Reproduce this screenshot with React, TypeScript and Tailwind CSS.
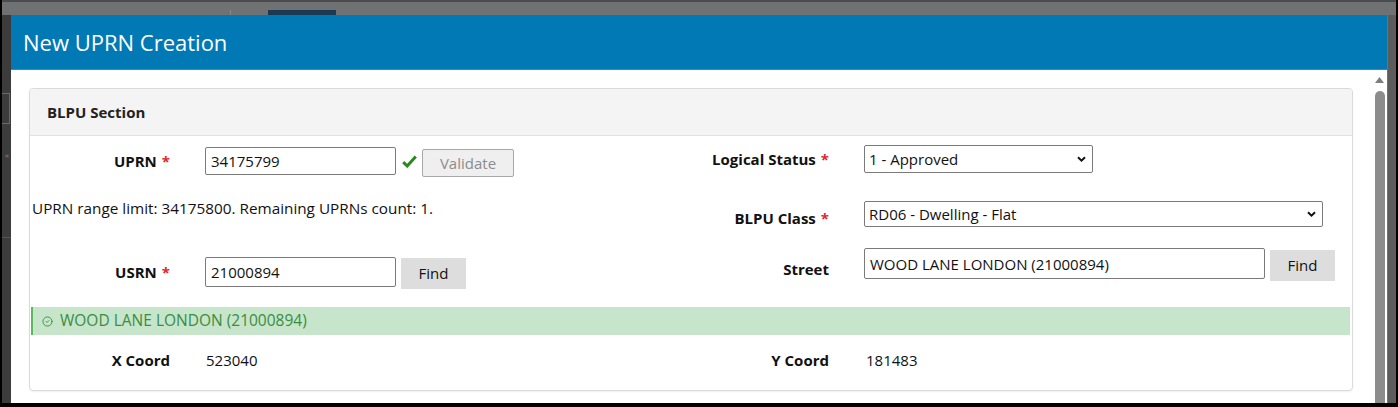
import { CircleCheck } from "lucide-react";

// 필수 라벨(빨간 별표)
function Label({ text, required, className = "" }: { text: string; required?: boolean; className?: string }) {
  return (
    <div className={`w-[140px] shrink-0 text-right text-[15px] leading-[20px] font-bold text-[#111] ${className}`}>
      {text}
      {required && <span className="ml-[5px] text-[#e0262b]">*</span>}
    </div>
  );
}

function TextBox({ value, w, h }: { value: string; w: string; h: string }) {
  return (
    <input
      readOnly
      value={value}
      className={`${w} ${h} shrink-0 rounded-[2px] border border-[#7a7a7a] bg-white px-[5px] text-[15px] text-[#111] outline-none`}
    />
  );
}

function Select({ value, w, h }: { value: string; w: string; h: string }) {
  return (
    <div className={`relative ${w} ${h} shrink-0`}>
      <select
        value={value}
        onChange={() => {}}
        className="h-full w-full appearance-none rounded-[2px] border border-[#7a7a7a] bg-white pl-[4px] text-[15px] text-[#111] outline-none"
      >
        <option>{value}</option>
      </select>
      {/* 셀렉트 화살표 */}
      <svg className="pointer-events-none absolute right-[7px] top-1/2 -translate-y-1/2" width="9" height="6" viewBox="0 0 9 6">
        <path d="M1 1.2 L4.5 4.6 L8 1.2" fill="none" stroke="#111" strokeWidth="2" />
      </svg>
    </div>
  );
}

export default function App() {
  return (
    <div className="h-[407px] w-[1398px] overflow-hidden bg-black px-[2px] pb-[4px] font-['Open_Sans',sans-serif]">
      <div className="relative flex h-full flex-col border-t-2 border-[#4a4c4e] bg-[#6f7173]">
        {/* 뒤쪽 화면(오버레이 아래) */}
        <div className="absolute bottom-0 left-0 top-[13px] w-[9px] bg-[#3c3c3c]" />
        <div className="absolute left-0 top-[91px] h-[31px] w-[8px] border border-l-0 border-[#6a6a6a]" />
        <div className="absolute left-[3px] top-[147px] text-[8px] text-[#8a8a8a]">«</div>
        <div className="absolute left-0 top-[235px] h-px w-[9px] bg-[#555]" />
        <div className="absolute left-[266px] top-[8px] h-[6px] w-[68px] bg-[#1c3954]" />
        <div className="absolute left-[228px] top-[8px] h-[6px] w-px bg-[#888]" />
        <div className="absolute bottom-0 right-0 top-[13px] w-[8px] bg-[#5c5c5c]" />

        <div className="relative ml-[9px] mt-[13px] flex w-[1376px] flex-1 flex-col overflow-hidden bg-white">
          <div className="flex h-[55px] shrink-0 items-center border-b border-[#2b8cc2] bg-[#0079b5] pl-[12px] text-[22px] text-white">
            New UPRN Creation
          </div>

          <div className="flex flex-1">
            <div className="flex-1 pl-[18px] pr-[19px] pt-[18px]">
              <div className="rounded-[4px] border border-[#dadada] shadow-[0_1px_2px_rgba(0,0,0,0.06)]">
                <div className="flex h-[47px] items-center rounded-t-[4px] border-b border-[#e2e2e2] bg-[#f4f4f4] px-[17px] text-[15px] font-bold text-[#222]">
                  BLPU Section
                </div>

                <div className="grid h-[171px] grid-cols-[659px_1fr]">
                  {/* 왼쪽 열 */}
                  <div className="pt-[11px]">
                    <div className="flex h-[28px] items-center">
                      <Label text="UPRN" required />
                      <div className="ml-[35px]">
                        <TextBox value="34175799" w="w-[191px]" h="h-[28px]" />
                      </div>
                      <svg className="ml-[6px]" width="15" height="13" viewBox="0 0 15 13">
                        <path d="M1.2 7.2 L5.2 11 L13.8 1.6" fill="none" stroke="#2a8a1f" strokeWidth="3" strokeLinejoin="miter" />
                      </svg>
                      <button className="ml-[5px] mt-[4px] h-[28px] w-[92px] rounded-[2px] border border-[#a8a8a8] bg-[#efefef] text-[15px] text-[#8c8c8c]">
                        Validate
                      </button>
                    </div>
                    <div className="mt-[23px] pl-[2px] text-[15.3px] leading-[20px] text-[#111]">
                      UPRN range limit: 34175800. Remaining UPRNs count: 1.
                    </div>
                    <div className="mt-[39px] flex h-[30px] items-center">
                      <Label text="USRN" required />
                      <div className="ml-[35px]">
                        <TextBox value="21000894" w="w-[191px]" h="h-[30px]" />
                      </div>
                      <button className="ml-[5px] mt-[2px] h-[31px] w-[65px] bg-[#dddddd] text-[15px] text-[#111]">Find</button>
                    </div>
                  </div>

                  {/* 오른쪽 열 */}
                  <div className="pt-[9px]">
                    <div className="flex h-[28px] items-center">
                      <Label text="Logical Status" required />
                      <div className="ml-[35px]">
                        <Select value="1 - Approved" w="w-[229px]" h="h-[28px]" />
                      </div>
                    </div>
                    <div className="mt-[28px] flex h-[26px] items-end">
                      <Label text="BLPU Class" required className="-mb-[1px]" />
                      <div className="ml-[35px]">
                        <Select value="RD06 - Dwelling - Flat" w="w-[459px]" h="h-[26px]" />
                      </div>
                    </div>
                    <div className="mt-[21px] flex h-[31px] items-end">
                      <Label text="Street" className="mb-0" />
                      <div className="ml-[35px]">
                        <TextBox value="WOOD LANE LONDON (21000894)" w="w-[401px]" h="h-[31px]" />
                      </div>
                      <button className="mb-[-2px] ml-[5px] h-[31px] w-[65px] bg-[#dddddd] text-[15px] text-[#111]">Find</button>
                    </div>
                  </div>
                </div>

                <div className="ml-px mr-[2px] flex h-[28px] items-center border-l-2 border-[#5cb85c] bg-[#c6e5cb] pl-[9px] text-[15.5px] text-[#3b8d3f]">
                  <CircleCheck size={11} strokeWidth={2} />
                  <span className="ml-[7px]">WOOD LANE LONDON (21000894)</span>
                </div>

                <div className="grid grid-cols-[659px_1fr] pb-[20px] pt-[15px]">
                  <div className="flex h-[20px] items-center">
                    <Label text="X Coord" />
                    <span className="ml-[36px] text-[15px] text-[#111]">523040</span>
                  </div>
                  <div className="flex h-[20px] items-center">
                    <Label text="Y Coord" />
                    <span className="ml-[37px] text-[15px] text-[#111]">181483</span>
                  </div>
                </div>
              </div>
            </div>

            {/* 스크롤바 */}
            <div className="flex w-[15px] shrink-0 flex-col items-center">
              <svg className="mt-[7px]" width="9" height="6" viewBox="0 0 9 6">
                <path d="M0 6 L4.5 0 L9 6 Z" fill="#7e7e7e" />
              </svg>
              <div className="mt-[8px] w-[10px] flex-1 rounded-t-full bg-[#8c8c8c]" />
            </div>
          </div>
        </div>
      </div>
    </div>
  );
}
